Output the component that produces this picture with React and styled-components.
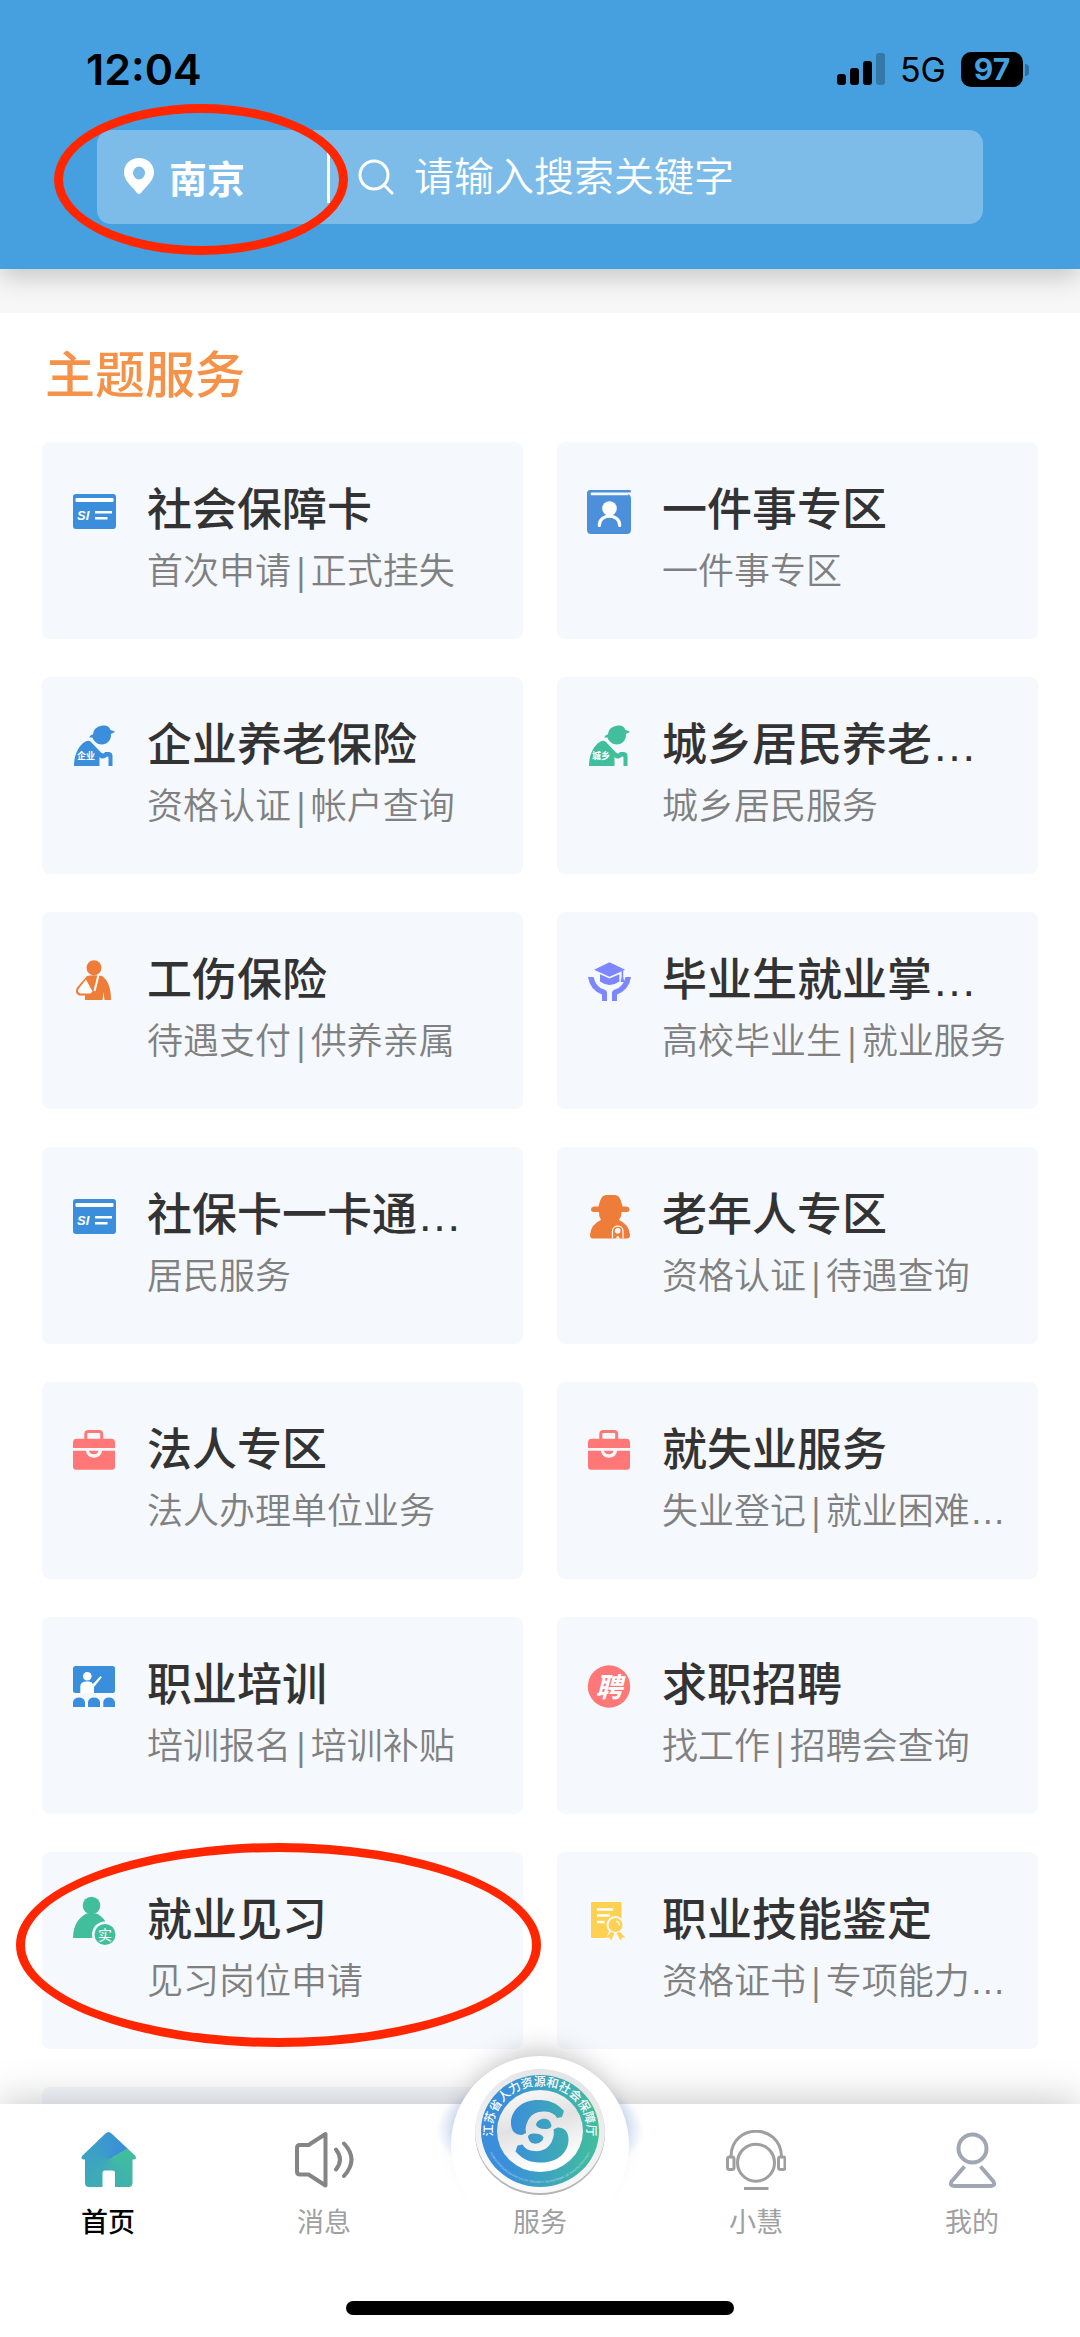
import React from "react";
import styled, { createGlobalStyle } from "styled-components";

const BLUE = "#3a8edb";
const GREEN = "#41bf9c";
const ORANGE = "#ef7d3a";
const PINK = "#ff7777";

/* ---------- service icons ---------- */

const CardIcon = () => (
  <Icon viewBox="0 0 44 44">
    <rect x="1" y="4" width="43" height="35" rx="3" fill={BLUE} />
    <rect x="3.5" y="8" width="38" height="4" rx="1" fill="#fff" />
    <text x="5" y="29.5" fontSize="13" fontWeight="700" fontStyle="italic" fill="#fff">
      SI
    </text>
    <path d="M23 22.3h17M23 28.3h12.5" stroke="#fff" strokeWidth="2.4" />
  </Icon>
);

const BookIcon = () => (
  <Icon viewBox="0 0 44 44">
    <path
      d="M3 0H42.5Q44 0 44 1.3T42.5 2.6H5Q3.6 2.6 3.6 4H40Q44 4.6 44 8.5V40Q44 44 40 44H4Q0 44 0 40V3.5Q0 0 3 0Z"
      fill="#4c90dc"
    />
    <path d="M3.8 4.2H41" stroke="#f5f8fd" strokeWidth="2" />
    <circle cx="22.5" cy="18.5" r="7.3" fill="#fff" />
    <path d="M12.3 35.5C12 23 33 23 32.7 35.5" fill="none" stroke="#fff" strokeWidth="3.2" strokeLinecap="round" />
  </Icon>
);

const ElderIcon = ({ color, label }) => (
  <Icon viewBox="0 0 44 44">
    <path
      d="M17 12.5L19 10L21 9.5C21.5 3 27 1 31 .6Q36.5 0 38.5 5L43 6.5Q41.5 8.5 39 8.8C39.5 16 34.5 19.5 30 19.5C25 19.5 21.5 16 20.5 12.5Z"
      fill={color}
    />
    <path
      d="M2 41C2 28 8 20 12 17.5Q16 14.5 19 17L29 27.5Q32 29.5 33 27H37Q40.5 27.5 40.5 31V41H36.5V32.5Q36 31 34.5 32Q30 35 27.5 32V41Z"
      fill={color}
    />
    <text x="14" y="34" fontSize="9" fontWeight="700" fill="#fff" textAnchor="middle">
      {label}
    </text>
  </Icon>
);

const InjuryIcon = () => (
  <Icon viewBox="0 0 44 44">
    <circle cx="22" cy="7.7" r="7.5" fill={ORANGE} />
    <path d="M15 16Q22 14.5 30 16C36 20 39 28 39 40H32.5L31.5 32L30.5 40H13V35.5H8C4 35 3 31 5 27.5Z" fill={ORANGE} />
    <path d="M14 19.5L20.5 31.5L18.5 33.5H8.5C6 33 5.5 31 6.5 29Z" fill="#fff" />
    <path d="M26.5 15L22.5 31" stroke="#fff" strokeWidth="2" />
  </Icon>
);

const GraduateIcon = () => (
  <Icon viewBox="0 0 44 44" fill="#7b86ff">
    <path d="M22.5 2.3L38.2 9.7L22.5 16.7L7 9.7Z" />
    <path d="M13 14.2L22.5 18.6L32.4 14.2V21.5Q22.5 28.5 13 21.5Z" />
    <path d="M34.6 11h1.6v6l1 5h-3.6l1-5Z" />
    <path d="M1 17H6.5Q9 27.5 17 29.5Q20 30.5 20 33V41H15V34.5Q3 30 1 17Z" />
    <path d="M44 17H38.5Q36 27.5 28 29.5Q25 30.5 25 33V41H30V34.5Q42 30 44 17Z" />
  </Icon>
);

const SeniorIcon = () => (
  <Icon viewBox="0 0 44 44">
    <path
      d="M13 6Q15 0 19 0H28Q32 0 34 6L35.5 11.5H39.5Q42.5 12 42.5 14.5T39.5 17H34.5Q35 21 32 25Q42 29 43 40Q43 43.5 40 43.5H6Q3 43.5 3 40Q4 29 14 25Q11.5 21 12 17H7Q4 17 4 14.5T7 11.5H11.5Z"
      fill={ORANGE}
    />
    <path d="M25.5 43V36C25.5 29.5 36 29.5 36 36V43" fill="none" stroke="#fff" strokeWidth="1.2" />
    <circle cx="30.7" cy="35.8" r="2.8" fill="#fff" />
    <path d="M28.5 43.5L30.7 40.5L33 43.5Z" fill="#fff" />
  </Icon>
);

const BriefcaseIcon = () => (
  <Icon viewBox="0 0 44 44">
    <path d="M13.8 9V4Q13.8 1.5 16.5 1.5H27Q29.7 1.5 29.7 4V9" fill="none" stroke={PINK} strokeWidth="3" />
    <path d="M1 18V12.5Q1 8.7 4.5 8.7H39.5Q43 8.7 43 12.5V18Z" fill={PINK} />
    <path d="M1 20.7H14C15 30 29 30 30 20.7H43V36.5Q43 39.7 40 39.7H4Q1 39.7 1 36.5Z" fill={PINK} />
    <path d="M17 20.7H26.5C26 25.5 17.5 25.5 17 20.7Z" fill={PINK} />
  </Icon>
);

const TrainingIcon = () => (
  <Icon viewBox="0 0 44 44">
    <rect x="1" y="1" width="42" height="27" rx="2.5" fill={BLUE} />
    <circle cx="15.3" cy="11.3" r="4.3" fill="#fff" />
    <path d="M8.3 28V21Q9 16.5 14 16.5H17Q20 16.5 21 19L28.5 11L29.8 12.2L22 22V28Z" fill="#fff" />
    <path
      d="M1 42V37Q2 32.5 7 32.5T13 37V42ZM16 42V37Q17 32.5 22 32.5T28 37V42ZM31.3 42V37Q32 32.5 37 32.5T43 37V42Z"
      fill={BLUE}
    />
  </Icon>
);

const HireIcon = () => (
  <Icon viewBox="0 0 44 44">
    <circle cx="22" cy="21.5" r="21.2" fill={PINK} />
    <text x="22" y="31.5" fontSize="27" fontWeight="700" fontStyle="italic" fill="#fff" textAnchor="middle">
      聘
    </text>
  </Icon>
);

const InternIcon = () => (
  <Icon viewBox="0 0 44 44">
    <circle cx="19.5" cy="5.5" r="8.8" fill={GREEN} />
    <path d="M1 38C1 24 8 17 14.5 13.5H24.5Q30 16 33 21V38Z" fill={GREEN} />
    <circle cx="33" cy="34.5" r="13" fill="#f5f8fd" />
    <circle cx="33" cy="34.5" r="10.5" fill={GREEN} />
    <text x="33" y="39.5" fontSize="14" fill="#fff" textAnchor="middle">
      实
    </text>
  </Icon>
);

const CertificateIcon = () => (
  <Icon viewBox="0 0 44 44">
    <rect x="4" y="2" width="30.5" height="36" rx="1" fill="#ffd152" />
    <path d="M10 9.5H26M10 15.5H23M10 22H17.5" stroke="#fff" strokeWidth="2.4" />
    <path d="M23 29L18.5 39.5H38.5L34 29Z" fill="#f5f8fd" />
    <circle cx="28.5" cy="25" r="9" fill="#f5f8fd" />
    <circle cx="28.5" cy="25" r="7" fill="#ffd152" />
    <path d="M24 32L19 37.5L22.5 37.6L24 40.5L27.5 33ZM33 32L38.5 37.5L35 37.6L33.5 40.5L29.5 33Z" fill="#ffd152" />
    <path d="M29 21Q32.5 22 32.3 25.5" fill="none" stroke="#fff" strokeWidth="1.2" />
  </Icon>
);

/* ---------- tab bar icons ---------- */

const SpeakerIcon = () => (
  <TabSvg viewBox="0 0 60 60" stroke="#858585" strokeWidth="4">
    <path d="M31.5 4V55.5L14.5 44.5H6Q3 44.5 3 41.5V18Q3 15 6 15H14.5Z" strokeLinejoin="round" />
    <path d="M42 19.5Q50 29.5 42 39.5M50 13.5Q65 29.5 50 46" strokeLinecap="round" />
  </TabSvg>
);

const HeadsetIcon = () => (
  <TabSvg viewBox="0 0 60 60" stroke="#9f9f9f" strokeWidth="3">
    <path d="M5 26C6 -7 54 -7 55.5 26" />
    <rect x="1.5" y="27" width="6.5" height="12.5" rx="2" />
    <rect x="52.5" y="27" width="6.5" height="12.5" rx="2" />
    <circle cx="30" cy="32.7" r="18.5" />
    <path d="M18 58.5H42.5" />
  </TabSvg>
);

const MineIcon = () => (
  <TabSvg viewBox="0 0 60 60" stroke="#a1a6b4" strokeWidth="4">
    <circle cx="30.5" cy="18.5" r="14" />
    <path d="M22.5 36.5L9.5 51.5Q7.5 56 12 56H49Q53.5 56 51.5 51.5L38.5 36.5" />
  </TabSvg>
);

const Emblem = () => (
  <EmblemSvg viewBox="0 0 132 128">
    <defs>
      <linearGradient id="brand" x1="0" y1="0" x2="1" y2="0">
        <stop offset="0.2" stopColor={BLUE} />
        <stop offset="1" stopColor={GREEN} />
      </linearGradient>
      <linearGradient id="swirl" gradientUnits="userSpaceOnUse" x1="36" y1="0" x2="125" y2="0">
        <stop offset="0" stopColor={BLUE} />
        <stop offset="1" stopColor={GREEN} />
      </linearGradient>
      <linearGradient id="plate" x1="0" y1="0" x2="0.3" y2="1">
        <stop offset="0" stopColor="#fdfdfd" />
        <stop offset="0.5" stopColor="#e2e2e2" />
        <stop offset="1" stopColor="#ffffff" />
      </linearGradient>
      <linearGradient id="rim" x1="0.7" y1="0" x2="0.4" y2="1">
        <stop offset="0" stopColor="#e4e4e4" />
        <stop offset="1" stopColor="#fafafa" />
      </linearGradient>
      <path id="arcTop" d="M18.5 62A47 45 0 0 1 113 62" />
      <path id="arcBottom" d="M11 62A55 52 0 0 0 121 62" />
    </defs>
    <ellipse cx="66" cy="64" rx="65" ry="62" fill="#b5b5b5" />
    <ellipse cx="66" cy="62" rx="65" ry="62" fill="url(#rim)" />
    <ellipse cx="66" cy="62" rx="59" ry="56" fill="url(#brand)" />
    <ellipse cx="66" cy="62" rx="43" ry="41" fill="url(#plate)" />
    <g fill="url(#swirl)">
      <path d="M90 42C82 33 74 31 64 31C48 31 37 41 37 54C37 62 41 66 48 66L52 64Q51 58 53 54C56 45 63 42 71 42.5Q80 43 83 49L88 48Z" />
      <path d="M41.5 82.6C49.5 91.6 57.5 93.6 67.5 93.6C83.5 93.6 94.5 83.6 94.5 70.6C94.5 62.6 90.5 58.6 83.5 58.6L79.5 60.6Q80.5 66.6 78.5 70.6C75.5 79.6 68.5 82.6 60.5 82.1Q51.5 81.6 48.5 75.6L43.5 76.6Z" />
      <path d="M62 56C63 49 75 47 77 55Q79 59 73 60Q64 60.5 62 56Z" />
      <path d="M69.5 68.6C68.500 75.6 56.5 77.6 54.5 69.6Q52.5 65.6 58.5 64.6Q67.5 64.1 69.5 68.6Z" />
    </g>
    <text fontSize="12" fontWeight="500" fill="#fff" textAnchor="middle">
      <textPath href="#arcTop" startOffset="50%">
        江苏省人力资源和社会保障厅
      </textPath>
    </text>
    <text fontSize="3" fill="#fff" fillOpacity="0.6" textAnchor="middle">
      <textPath href="#arcBottom" startOffset="50%">
        HUMAN RESOURCES AND SOCIAL SECURITY DEPARTMENT OF JIANGSU PROVINCE
      </textPath>
    </text>
  </EmblemSvg>
);

const services = [
  { title: "社会保障卡", desc: ["首次申请", "正式挂失"], icon: <CardIcon /> },
  { title: "一件事专区", desc: ["一件事专区"], icon: <BookIcon /> },
  { title: "企业养老保险", desc: ["资格认证", "帐户查询"], icon: <ElderIcon color={BLUE} label="企业" /> },
  { title: "城乡居民养老…", desc: ["城乡居民服务"], icon: <ElderIcon color={GREEN} label="城乡" /> },
  { title: "工伤保险", desc: ["待遇支付", "供养亲属"], icon: <InjuryIcon /> },
  { title: "毕业生就业掌…", desc: ["高校毕业生", "就业服务"], icon: <GraduateIcon /> },
  { title: "社保卡一卡通…", desc: ["居民服务"], icon: <CardIcon /> },
  { title: "老年人专区", desc: ["资格认证", "待遇查询"], icon: <SeniorIcon /> },
  { title: "法人专区", desc: ["法人办理单位业务"], icon: <BriefcaseIcon /> },
  { title: "就失业服务", desc: ["失业登记", "就业困难…"], icon: <BriefcaseIcon /> },
  { title: "职业培训", desc: ["培训报名", "培训补贴"], icon: <TrainingIcon /> },
  { title: "求职招聘", desc: ["找工作", "招聘会查询"], icon: <HireIcon /> },
  { title: "就业见习", desc: ["见习岗位申请"], icon: <InternIcon />, marked: true },
  { title: "职业技能鉴定", desc: ["资格证书", "专项能力…"], icon: <CertificateIcon /> },
];

const App = () => {
  const tabs = [
    { label: "首页", icon: <HomeMark />, active: true },
    { label: "消息", icon: <SpeakerIcon /> },
    { label: "服务", emblem: true },
    { label: "小慧", icon: <HeadsetIcon /> },
    { label: "我的", icon: <MineIcon /> },
  ];

  return (
    <Screen>
      <GlobalStyle />
      <Header>
        <StatusBar>
          <Clock>12:04</Clock>
          <StatusRight>
            <svg width="48" height="32" viewBox="0 0 48 32">
              <rect x="0" y="21" width="9" height="11" rx="3" />
              <rect x="13" y="15" width="9" height="17" rx="3" />
              <rect x="26" y="8" width="9" height="24" rx="3" />
              <rect x="39" y="0" width="9" height="32" rx="3" opacity="0.25" />
            </svg>
            <Network>5G</Network>
            <Battery>97</Battery>
          </StatusRight>
        </StatusBar>
        <SearchBar>
          <CityButton type="button">
            <svg width="30" height="36" viewBox="0 0 30 36">
              <path
                d="M15 0C6 0 0 6.5 0 14.5C0 23 8 28 13 35Q15 37 17 35C22 28 30 23 30 14.5C30 6.5 24 0 15 0ZM15 8.5A6 6.5 0 1 1 15 21.5A6 6.5 0 1 1 15 8.5Z"
                fill="#fff"
                fillRule="evenodd"
              />
            </svg>
            南京
            <CityMark />
          </CityButton>
          <Divider />
          <SearchLabel>
            <svg width="36" height="36" viewBox="0 0 36 36" fill="none" stroke="#fff" strokeWidth="3">
              <circle cx="16" cy="16" r="14" />
              <path d="M26 26L34 34" strokeLinecap="round" />
            </svg>
            <SearchInput type="text" placeholder="请输入搜索关键字" aria-label="搜索" />
          </SearchLabel>
        </SearchBar>
      </Header>

      <Content>
        <Spacer />
        <SectionTitle>主题服务</SectionTitle>
        <Grid>
          {services.map((s) => (
            <Card key={s.title} href="#">
              {s.icon}
              <CardText>
                <CardTitle>{s.title}</CardTitle>
                <CardDesc>
                  {s.desc.map((d, i) => (
                    <React.Fragment key={d}>
                      {i > 0 && <Pipe>|</Pipe>}
                      {d}
                    </React.Fragment>
                  ))}
                </CardDesc>
              </CardText>
              {s.marked && <CardMark />}
            </Card>
          ))}
          <EmptyCard />
        </Grid>
      </Content>

      <TabBar>
        <Tabs>
          {tabs.map((t) => (
            <Tab key={t.label} type="button" $active={t.active}>
              <TabSlot>
                {t.emblem ? (
                  <>
                    <Glow />
                    <Disc>
                      <Emblem />
                    </Disc>
                  </>
                ) : (
                  t.icon
                )}
              </TabSlot>
              <TabLabel>{t.label}</TabLabel>
            </Tab>
          ))}
        </Tabs>
        <HomeIndicator />
      </TabBar>
    </Screen>
  );
};

export default App;

const GlobalStyle = createGlobalStyle`
  * {
    box-sizing: border-box;
  }

  body {
    margin: 0;
    background-color: #fff;
    font-family: "Liberation Sans", "Noto Sans CJK SC", sans-serif;
  }

  button, input {
    font-family: inherit;
  }
`;

const Screen = styled.div`
  display: flex;
  flex-direction: column;
  height: 100vh;
  overflow: hidden;
`;

const Header = styled.header`
  position: relative;
  z-index: 1;
  padding-bottom: 45px;
  background-color: #46a0e0;
  box-shadow: 0 8px 24px rgba(0, 0, 0, 0.2);
`;

const StatusBar = styled.div`
  display: flex;
  align-items: center;
  justify-content: space-between;
  height: 130px;
  padding: 8px 57px 0 86px;
  color: #000;
  font-family: Inter, sans-serif;
`;

const Clock = styled.span`
  font-size: 43px;
  font-weight: 600;
`;

const StatusRight = styled.div`
  display: flex;
  align-items: center;
  gap: 15px;
`;

const Network = styled.span`
  font-size: 34px;
`;

const Battery = styled.span`
  position: relative;
  width: 62px;
  border-radius: 10px;
  background-color: #000;
  color: #46a0e0;
  font-size: 30px;
  font-weight: 700;
  line-height: 35px;
  text-align: center;

  &::after {
    content: "";
    position: absolute;
    top: 12px;
    right: -6px;
    width: 4px;
    height: 12px;
    border-radius: 0 4px 4px 0;
    background-color: rgba(0, 0, 0, 0.3);
  }
`;

const SearchBar = styled.div`
  display: flex;
  align-items: center;
  height: 94px;
  margin: 0 97px;
  border-radius: 14px;
  background-color: #7dbce9;
`;

const CityButton = styled.button`
  position: relative;
  display: flex;
  align-items: center;
  gap: 15px;
  width: 230px;
  height: 94px;
  padding: 0 0 2px 27px;
  border: none;
  background: none;
  color: #fff;
  font-size: 38px;
  font-weight: 700;
`;

const Divider = styled.span`
  width: 3px;
  height: 52px;
  background-color: #fff;
`;

const SearchLabel = styled.label`
  display: flex;
  flex: 1;
  align-items: center;
  gap: 20px;
  padding: 0 28px;
`;

const SearchInput = styled.input`
  flex: 1;
  min-width: 0;
  padding: 0;
  border: none;
  outline: none;
  background: none;
  color: #fff;
  font-size: 40px;
  font-weight: 350;
  line-height: 60px;

  &::placeholder {
    color: #fff;
    opacity: 1;
  }
`;

/* red highlight rings */
const Ring = styled.span`
  position: absolute;
  z-index: 2;
  border: 9px solid #ff2600;
  border-radius: 50%;
  pointer-events: none;
`;

const CityMark = styled(Ring)`
  top: -26px;
  right: -21px;
  bottom: -31px;
  left: -43px;
`;

const CardMark = styled(Ring)`
  top: -9px;
  right: -18px;
  bottom: 2px;
  left: -26px;
`;

const Content = styled.main`
  flex: 1;
  min-height: 0;
  overflow-x: hidden;
  overflow-y: auto;
  scrollbar-width: none;
`;

const Spacer = styled.div`
  height: 44px;
  background-color: #f7f7f7;
`;

const SectionTitle = styled.h1`
  margin: 0;
  padding: 26px 45px 28px;
  color: #f5924a;
  font-size: 50px;
  font-weight: 500;
  line-height: 75px;
`;

const Grid = styled.div`
  display: grid;
  grid-template-columns: 1fr 1fr;
  gap: 38px 34px;
  padding: 0 42px 38px;
`;

const Card = styled.a`
  position: relative;
  display: flex;
  gap: 31px;
  min-width: 0;
  min-height: 197px;
  padding: 38px 16px 0 30px;
  border-radius: 8px;
  background-color: #f5f8fd;
  text-decoration: none;
`;

const EmptyCard = styled.div`
  min-height: 197px;
  border-radius: 8px;
  background-color: #f5f8fd;
`;

const Icon = styled.svg`
  flex: none;
  width: 44px;
  height: 44px;
  margin-top: 10px;
  overflow: visible;
`;

const CardText = styled.div`
  min-width: 0;
  white-space: nowrap;
`;

const CardTitle = styled.h2`
  margin: 0;
  color: #333;
  font-size: 45px;
  font-weight: 500;
  line-height: 62px;
`;

const CardDesc = styled.p`
  margin: 0;
  color: #808080;
  font-size: 36px;
  font-weight: 350;
  line-height: 60px;
`;

const Pipe = styled.span`
  font-family: "Noto Sans", sans-serif;
  font-weight: 400;
  line-height: 1;
`;

const TabBar = styled.nav`
  position: relative;
  z-index: 1;
  padding: 26px 0 22px;
  background-color: #fff;
  box-shadow: 0 0 40px rgba(0, 0, 0, 0.25);
`;

const Tabs = styled.div`
  display: grid;
  grid-template-columns: repeat(5, 1fr);
`;

const Tab = styled.button`
  display: flex;
  flex-direction: column;
  align-items: center;
  gap: 14px;
  padding: 0;
  border: none;
  background: none;
  color: ${(props) => (props.$active ? "#000" : "#a0a0a0")};
  font-weight: ${(props) => (props.$active ? 500 : 400)};
`;

const TabSlot = styled.span`
  position: relative;
  width: 60px;
  height: 60px;
`;

const TabLabel = styled.span`
  position: relative;
  font-size: 27px;
  line-height: 38px;
`;

const TabSvg = styled.svg`
  display: block;
  width: 60px;
  height: 60px;
  fill: none;
`;

const HomeMark = styled.span`
  display: block;
  width: 60px;
  height: 60px;
  background: conic-gradient(from 60deg at 31px 29px, #41bf9c, #3a8edb);
  clip-path: path(
    "M27.5 3.5Q30.5 .5 33.5 3.5L57 25.5Q59.5 29 56 29.5H54.5V53Q54.5 57 50.5 57H37V43Q37 40.5 34.5 40.5H27Q24.5 40.5 24.5 43V57H11Q7 57 7 53V29.5H5.5Q2 29 4.5 25.5Z"
  );
`;

const Glow = styled.span`
  position: absolute;
  top: -54px;
  left: -74px;
  width: 208px;
  height: 108px;
  background: radial-gradient(closest-side, rgba(110, 160, 235, 0.4) 74%, rgba(110, 160, 235, 0) 100%);
`;

const Disc = styled.span`
  position: absolute;
  top: -74px;
  left: -59px;
  display: flex;
  justify-content: center;
  width: 178px;
  height: 178px;
  padding-top: 13px;
  border-radius: 50%;
  background-color: #fff;
  box-shadow: 0 -18px 28px -14px rgba(0, 0, 0, 0.25);
`;

const EmblemSvg = styled.svg`
  width: 132px;
  height: 128px;
`;

const HomeIndicator = styled.div`
  width: 36%;
  height: 14px;
  margin: 59px auto 0;
  border-radius: 7px;
  background-color: #000;
`;
